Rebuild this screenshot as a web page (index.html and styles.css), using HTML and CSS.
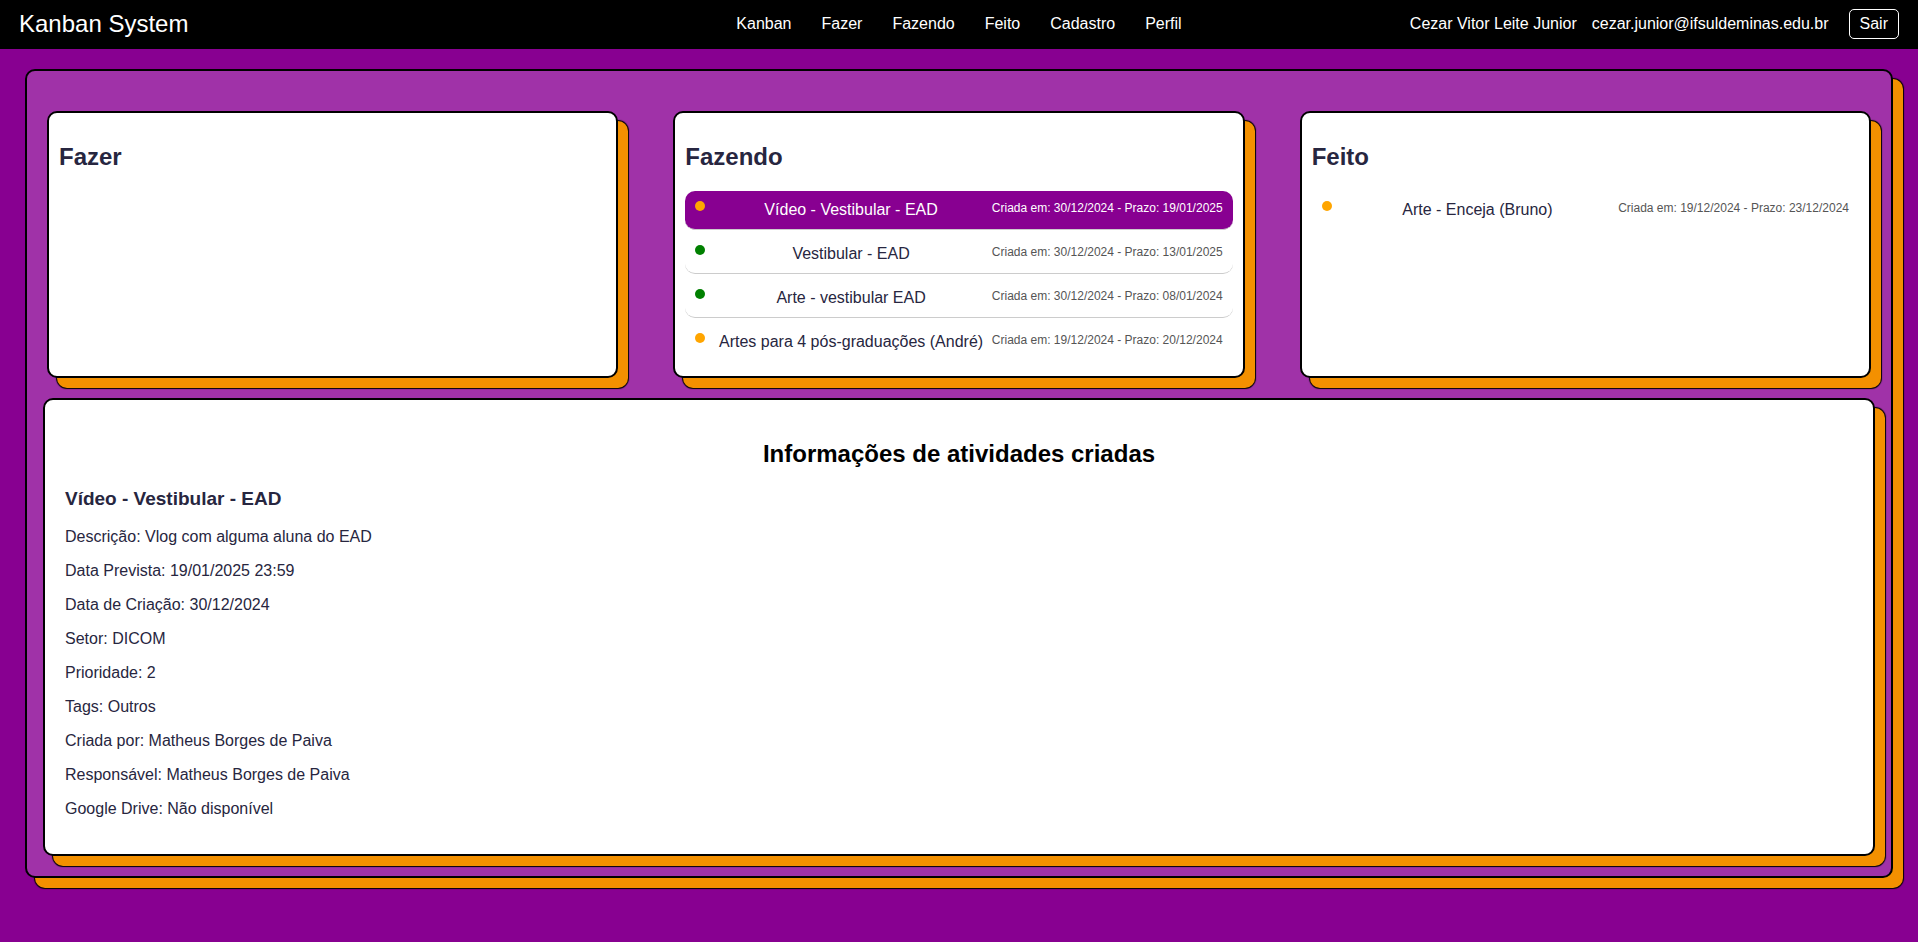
FILE: index.html
```html
<!DOCTYPE html>
<html lang="pt-BR">
<head>
<meta charset="utf-8">
<meta name="viewport" content="width=device-width, initial-scale=1">
<title>Kanban System</title>
<link rel="stylesheet" href="styles.css">
</head>
<body>
<header class="topbar">
  <div class="brand">Kanban System</div>
  <nav class="menu">
    <a href="#kanban">Kanban</a>
    <a href="#fazer">Fazer</a>
    <a href="#fazendo">Fazendo</a>
    <a href="#feito">Feito</a>
    <a href="#cadastro">Cadastro</a>
    <a href="#perfil">Perfil</a>
  </nav>
  <div class="user">
    <span>Cezar Vitor Leite Junior</span>
    <span>cezar.junior@ifsuldeminas.edu.br</span>
    <button class="logout" type="button">Sair</button>
  </div>
</header>
<main class="board card">
  <div class="columns">
    <section class="column card" id="fazer">
      <h2>Fazer</h2>
    </section>
    <section class="column card" id="fazendo">
      <h2>Fazendo</h2>
      <ul class="tasks">
        <li><button class="task selected" type="button"><span class="dot medium"></span><span class="name">Vídeo - Vestibular - EAD</span><span class="dates">Criada em: 30/12/2024 - Prazo: 19/01/2025</span></button></li>
        <li><button class="task" type="button"><span class="dot low"></span><span class="name">Vestibular - EAD</span><span class="dates">Criada em: 30/12/2024 - Prazo: 13/01/2025</span></button></li>
        <li><button class="task" type="button"><span class="dot low"></span><span class="name">Arte - vestibular EAD</span><span class="dates">Criada em: 30/12/2024 - Prazo: 08/01/2024</span></button></li>
        <li><button class="task" type="button"><span class="dot medium"></span><span class="name">Artes para 4 pós-graduações (André)</span><span class="dates">Criada em: 19/12/2024 - Prazo: 20/12/2024</span></button></li>
      </ul>
    </section>
    <section class="column card" id="feito">
      <h2>Feito</h2>
      <ul class="tasks">
        <li><button class="task" type="button"><span class="dot medium"></span><span class="name">Arte - Enceja (Bruno)</span><span class="dates">Criada em: 19/12/2024 - Prazo: 23/12/2024</span></button></li>
      </ul>
    </section>
  </div>
  <section class="details card">
    <h2>Informações de atividades criadas</h2>
    <h3>Vídeo - Vestibular - EAD</h3>
    <p>Descrição: Vlog com alguma aluna do EAD</p>
    <p>Data Prevista: 19/01/2025 23:59</p>
    <p>Data de Criação: 30/12/2024</p>
    <p>Setor: DICOM</p>
    <p>Prioridade: 2</p>
    <p>Tags: Outros</p>
    <p>Criada por: Matheus Borges de Paiva</p>
    <p>Responsável: Matheus Borges de Paiva</p>
    <p>Google Drive: Não disponível</p>
  </section>
</main>
</body>
</html>
```
FILE: styles.css
```css
* {
  box-sizing: border-box;
}

body {
  margin: 0;
  min-height: 100vh;
  background: #880091;
  color: #272640;
  font-family: "Liberation Sans", Arial, sans-serif;
  font-size: 16px;
  line-height: 18px;
}

button {
  font: inherit;
  color: inherit;
  background: none;
  cursor: pointer;
}

/* Top bar */
.topbar {
  display: grid;
  grid-template-columns: 1fr auto 1fr;
  align-items: center;
  padding: 9px 19px 10px;
  background: #000;
  color: #fff;
}

.brand {
  font-size: 24px;
  line-height: 28px;
}

.menu {
  display: flex;
  gap: 30px;
}

.menu a {
  color: #fff;
  text-decoration: none;
}

.user {
  display: flex;
  justify-content: flex-end;
  align-items: center;
  gap: 15px;
}

.logout {
  margin-left: 5px;
  padding: 5px 10px;
  border: 1px solid #fff;
  border-radius: 5px;
}

/* Outlined boxes with an offset orange shadow */
.card {
  border: 2px solid #000;
  border-radius: 10px;
  background: #fff;
  box-shadow: 10px 10px 0 #f39000, 10px 10px 1px 1px #000;
}

.board {
  display: flex;
  flex-direction: column;
  gap: 20px;
  margin: 20px 25px 64px;
  padding: 40px 16px 20px;
  background: #a032a8;
}

.columns {
  display: grid;
  grid-template-columns: repeat(3, minmax(0, 1fr));
  gap: 55px;
  padding: 0 4px;
}

.column {
  padding: 10px 10px 15px;
}

h2 {
  margin: 20px 0;
  font-size: 24px;
  line-height: 28px;
}

/* Task lists */
.tasks {
  display: grid;
  gap: 5px;
  margin: 0;
  padding: 0;
  list-style: none;
}

.task {
  display: flex;
  align-items: flex-start;
  width: 100%;
  padding: 10px;
  border: 0;
  border-bottom: 1px solid #ccc;
  border-radius: 10px;
}

.tasks li:last-child .task {
  border-bottom: 0;
}

.dot {
  width: 10px;
  height: 10px;
  margin-right: 5px;
  border-radius: 50%;
}

.medium {
  background: #ffa500;
}

.low {
  background: #008000;
}

.name {
  flex: 1;
  text-align: center;
}

.dates {
  color: #555;
  font-size: 12px;
  line-height: 14px;
}

.selected {
  background: #880091;
}

.selected .name,
.selected .dates {
  color: #fff;
}

/* Details of the selected task */
.details {
  padding: 20px;
}

.details h2 {
  color: #000;
  text-align: center;
}

h3 {
  margin: 0 0 19px;
  font-size: 19px;
  line-height: 21px;
}

p {
  margin: 0 0 16px;
}
```
